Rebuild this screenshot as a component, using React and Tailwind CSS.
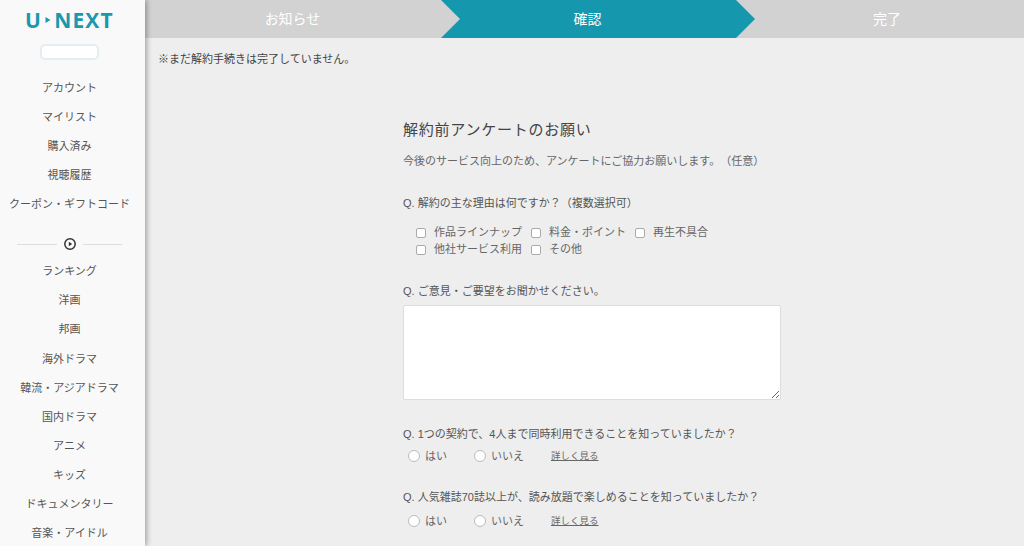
const jp = "font-['Liberation_Sans','Noto_Sans_CJK_JP',sans-serif]";

const accountLinks = ['アカウント', 'マイリスト', '購入済み', '視聴履歴', 'クーポン・ギフトコード'];
const genreLinks = ['ランキング', '洋画', '邦画', '海外ドラマ', '韓流・アジアドラマ', '国内ドラマ', 'アニメ', 'キッズ', 'ドキュメンタリー', '音楽・アイドル'];
const reasons = [
  ['作品ラインナップ', '料金・ポイント', '再生不具合'],
  ['他社サービス利用', 'その他'],
];

const SideLink = ({ label }) => (
  <a className="h-[29.1px] shrink-0 flex items-center justify-center whitespace-nowrap text-[11px] text-[#555]">{label}</a>
);

const Sidebar = () => (
  <aside className="w-[145px] h-full shrink-0 bg-[#f9f9f9] shadow-[2px_0_5px_rgba(0,0,0,0.3)] z-10 flex flex-col items-center overflow-hidden pr-[6px]">
    <div className="mt-[9px] h-[22px] shrink-0 flex items-center text-[#1a99ae] font-['Open_Sans',sans-serif] font-bold text-[21px] leading-none tracking-[1.2px]">
      <span>U</span>
      <svg width="6" height="8" viewBox="0 0 6 8" className="mx-[3px]">
        <path d="M0.5 1l5 3-5 3z" fill="#1a99ae" />
      </svg>
      <span>NEXT</span>
    </div>
    <div className="mt-[13px] w-[59px] h-[16px] shrink-0 rounded-[5px] bg-white border-2 border-[#e3eef2]" />
    <nav className="mt-[13.5px] w-full shrink-0 flex flex-col">
      {accountLinks.map((l) => <SideLink key={l} label={l} />)}
    </nav>
    <div className="mt-[18.5px] mb-[5.5px] w-[105px] h-[14px] shrink-0 flex items-center gap-[6px]">
      <div className="flex-1 h-px bg-[#ddd]" />
      <svg width="14" height="14" viewBox="0 0 14 14">
        <circle cx="7" cy="7" r="5.2" fill="none" stroke="#333" strokeWidth="1.5" />
        <path d="M5.8 4.8l3.4 2.2-3.4 2.2z" fill="#333" />
      </svg>
      <div className="flex-1 h-px bg-[#ddd]" />
    </div>
    <nav className="w-full shrink-0 flex flex-col">
      {genreLinks.map((l) => <SideLink key={l} label={l} />)}
    </nav>
  </aside>
);

const Steps = () => (
  <div className="h-[38px] shrink-0 bg-[#d2d2d2] flex text-[14px] text-white">
    <div className="w-[295px] flex items-center justify-center">お知らせ</div>
    <div className="w-[315px] bg-[#1597ae] [clip-path:polygon(1px_0,296px_0,100%_50%,296px_100%,1px_100%,20px_50%)] flex items-center justify-center pr-[20px]">確認</div>
    <div className="flex-1 flex items-center justify-center pr-[5px]">完了</div>
  </div>
);

const Check = () => (
  <span className="w-[10px] h-[10px] rounded-[2px] border border-[#aaa] bg-white shrink-0" />
);

const Radio = () => (
  <span className="w-[12px] h-[12px] rounded-full border border-[#bbb] bg-white shrink-0" />
);

const YesNo = () => (
  <div className="h-[22px] flex items-center text-[11px] text-[#666]">
    <Radio />
    <span className="ml-[5px] w-[49px]">はい</span>
    <Radio />
    <span className="ml-[5px] w-[60px]">いいえ</span>
    <a className="text-[9.5px] underline text-[#666]">詳しく見る</a>
  </div>
);

const App = () => (
  <div className={`${jp} w-[1024px] h-[546px] flex overflow-hidden bg-[#eeeeee] [text-spacing-trim:space-all]`}>
    <Sidebar />
    <main className="flex-1 min-w-0 flex flex-col">
      <Steps />
      <p className="mt-[13px] ml-[13px] text-[11px] leading-[16px] text-[#444]">※まだ解約手続きは完了していません。</p>
      <section className="ml-[258px] w-[378px] mt-[52px]">
        <h1 className="text-[15px] leading-[22px] tracking-[0.75px] text-[#444]">解約前アンケートのお願い</h1>
        <p className="mt-[12px] text-[11px] leading-[16px] text-[#666]">今後のサービス向上のため、アンケートにご協力お願いします。（任意）</p>

        <p className="mt-[26px] text-[11px] leading-[16px] text-[#555]">Q. 解約の主な理由は何ですか？（複数選択可）</p>
        <div className="mt-[13px] ml-[13px] flex flex-col text-[11px] leading-[17px] text-[#666]">
          {reasons.map((row, i) => (
            <div key={i} className="flex items-center h-[17px]">
              {row.map((r) => (
                <label key={r} className="flex items-center mr-[9px]">
                  <Check />
                  <span className="ml-[8px]">{r}</span>
                </label>
              ))}
            </div>
          ))}
        </div>

        <p className="mt-[25px] text-[11px] leading-[16px] text-[#555]">Q. ご意見・ご要望をお聞かせください。</p>
        <textarea className="mt-[6px] block w-[378px] h-[95px] bg-white border border-[#ddd] rounded-[2px]" />

        <p className="mt-[26px] text-[11px] leading-[16px] text-[#555]">Q. 1つの契約で、4人まで同時利用できることを知っていましたか？</p>
        <div className="ml-[5px] mt-[3px]"><YesNo /></div>

        <p className="mt-[22px] text-[11px] leading-[16px] text-[#555]">Q. 人気雑誌70誌以上が、読み放題で楽しめることを知っていましたか？</p>
        <div className="ml-[5px] mt-[5px]"><YesNo /></div>
      </section>
    </main>
  </div>
);

export default App;
